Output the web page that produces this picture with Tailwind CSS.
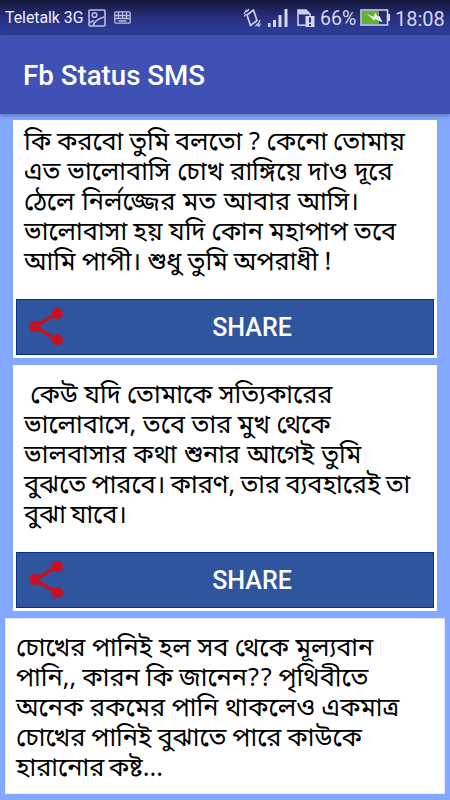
<!DOCTYPE html>
<html lang="bn">
<head>
  <meta charset="UTF-8" />
  <meta name="viewport" content="width=device-width, initial-scale=1.0" />
  <title>Fb Status SMS</title>
  <script src="https://cdn.jsdelivr.net/npm/@tailwindcss/browser@4"></script>
</head>
<body class="w-[450px] h-[800px] overflow-hidden bg-[#82a8ff] font-['Roboto',sans-serif]">
  <!-- status bar -->
  <div class="h-[35px] flex items-center pl-[5px] pr-[5px] bg-linear-to-b from-[#15173a] via-[#262f7c] to-[#303f9f] text-[#d5d8ec]">
    <span class="w-[80px] pt-px text-[15.800px] leading-none whitespace-nowrap text-[#eceef8]">Teletalk 3G</span>
    <svg class="ml-[3px]" width="18" height="18" viewBox="0 0 18 18" fill="none" stroke="#b9bedf" stroke-width="1.600">
      <rect x="1" y="1" width="16" height="16" rx="1" />
      <circle cx="6.500" cy="6" r="2.300" />
      <path d="M2 13.500l4-2M5 17c1-4.500 4-7 11-9" />
    </svg>
    <svg class="ml-[8px]" width="17" height="13" viewBox="0 0 17 13" fill="none" stroke="#b9bedf" stroke-width="1.300">
      <rect x=".8" y=".8" width="15.400" height="11.400" rx="1" />
      <path d="M1 4.500h15M1 7.500h15M4.500 1v6.500M8.500 1v6.500M12.500 1v6.500M4.500 10h8" />
    </svg>
    <div class="ml-auto flex items-center">
      <svg class="mr-px" width="18" height="20" viewBox="0 0 18 20" fill="none" stroke="#cdd1e8" stroke-width="1.200">
        <path d="M4 7L10.500 2L14 12.500L7.500 17.500Z" stroke-width="1.700" stroke-linejoin="round" />
        <path d="M3.500 1.500L1 6M6 1L3.500 4M1 8.500L3 6M17 12L14.500 18M17.500 15.500L15.500 19M14.500 15.500L12.500 18.500" />
      </svg>
      <svg class="ml-[5px]" width="22" height="20" viewBox="0 0 22 20" fill="#d5d8ec">
        <path d="M1 15h2.500v4H1zM6 12h3v7H6zM11.500 7h3v12h-3zM17.500 1h3v18h-3z" />
      </svg>
      <svg class="ml-[7px]" width="20" height="20" viewBox="0 0 20 20">
        <path d="M2 17.500V2h8l4 4v2" fill="none" stroke="#cdd1e8" stroke-width="1.600" />
        <path d="M2 2h8l4 4.500H2z" fill="#cdd1e8" />
        <path d="M1.500 17.200h8" stroke="#cdd1e8" stroke-width="1.600" />
        <path d="M9.500 8h9v11h-9z" fill="#d5d8ec" />
        <path d="M13 9.500h2v5h-2zM13 16h2v2h-2z" fill="#283282" />
      </svg>
      <span class="ml-[4px] w-[37px] pt-[2px] text-[19.500px] leading-none">66%</span>
      <svg class="ml-[3px]" width="30" height="17" viewBox="0 0 30 17">
        <rect x="1" y="1" width="26.500" height="15" fill="none" stroke="#d5d8ec" stroke-width="1.500" />
        <path d="M2 2h17v13H2z" fill="#62b132" />
        <path d="M28 5h2v7h-2z" fill="#d5d8ec" />
        <path d="M6.500 4.500L13.500 8L15.500 3.500L17.500 7.500L19.500 7L22.500 13.500L15.500 10L13.500 11.500L12 9.500Z" fill="#eceef8" />
      </svg>
      <span class="ml-[5px] w-[50px] pt-[2px] text-[20px] leading-none">18:08</span>
    </div>
  </div>

  <!-- toolbar -->
  <header class="relative h-[79px] flex items-center pl-[23px] bg-[#3f51b5] shadow-[0_1px_5px_rgba(0,0,0,0.4)]">
    <h1 class="pt-[3px] text-[27.700px] leading-none font-medium text-white">Fb Status SMS</h1>
  </header>

  <!-- messages -->
  <main class="pt-[6px] flex flex-col gap-[7px] text-[25.300px] leading-[30px] text-black font-['Noto_Sans_Bengali','Noto_Sans',sans-serif]">
    <article class="mx-[13px] h-[238px] bg-white p-[3px] flex flex-col justify-between">
      <div class="pl-[8px] pt-[6px] whitespace-nowrap">
        <p class="[word-spacing:-0.800px]">কি করবো তুমি বলতো ? কেনো তোমায়</p>
        <p class="[word-spacing:0.300px]">এত ভালোবাসি চোখ রাঙ্গিয়ে দাও দূরে</p>
        <p class="[word-spacing:1px]">ঠেলে নির্লজ্জের মত আবার আসি।</p>
        <p class="[word-spacing:-0.400px]">ভালোবাসা হয় যদি কোন মহাপাপ তবে</p>
        <p class="[word-spacing:-0.400px]">আমি পাপী। শুধু তুমি অপরাধী !</p>
      </div>
      <button class="relative h-[56px] w-full shrink-0 flex items-center justify-center bg-[#30559f] border border-[#07318d] pl-[54px] pt-[2px] font-['Roboto',sans-serif] text-[25px] font-medium text-white">
        <svg class="absolute left-[12px] top-[7px]" width="36" height="40" viewBox="0 0 36 40" fill="#c41224">
          <path d="M28 6.500L6 19.500L28 33" fill="none" stroke="#c41224" stroke-width="3.600" />
          <circle cx="28.300" cy="6.500" r="5.700" /><circle cx="5.700" cy="19.500" r="5.700" /><circle cx="28.300" cy="32.700" r="5.700" />
        </svg>
        <span>SHARE</span>
      </button>
    </article>

    <article class="mx-[13px] h-[246px] bg-white p-[3px] flex flex-col justify-between">
      <div class="pl-[8px] pt-[14px] whitespace-nowrap">
        <p class="[word-spacing:-0.300px]">&nbsp;কেউ যদি তোমাকে সত্যিকারের</p>
        <p>ভালোবাসে, তবে তার মুখ থেকে</p>
        <p class="[word-spacing:0.400px]">ভালবাসার কথা শুনার আগেই তুমি</p>
        <p class="[word-spacing:-1.300px]">বুঝতে পারবে। কারণ, তার ব্যবহারেই তা</p>
        <p class="[word-spacing:-2px]">বুঝা যাবে।</p>
      </div>
      <button class="relative h-[56px] w-full shrink-0 flex items-center justify-center bg-[#30559f] border border-[#07318d] pl-[54px] pt-[2px] font-['Roboto',sans-serif] text-[25px] font-medium text-white">
        <svg class="absolute left-[12px] top-[7px]" width="36" height="40" viewBox="0 0 36 40" fill="#c41224">
          <path d="M28 6.500L6 19.500L28 33" fill="none" stroke="#c41224" stroke-width="3.600" />
          <circle cx="28.300" cy="6.500" r="5.700" /><circle cx="5.700" cy="19.500" r="5.700" /><circle cx="28.300" cy="32.700" r="5.700" />
        </svg>
        <span>SHARE</span>
      </button>
    </article>

    <article class="ml-[5px] mr-[5px] h-[176px] bg-white border border-[#dfe8ff] pl-[10px] pt-[16px] whitespace-nowrap">
      <p>চোখের পানিই হল সব থেকে মূল্যবান</p>
      <p class="[word-spacing:-0.600px]">পানি,, কারন কি জানেন?? পৃথিবীতে</p>
      <p>অনেক রকমের পানি থাকলেও একমাত্র</p>
      <p class="[word-spacing:-0.700px]">চোখের পানিই বুঝাতে পারে কাউকে</p>
      <p class="[word-spacing:-2px]">হারানোর কষ্ট...</p>
    </article>
  </main>
</body>
</html>
